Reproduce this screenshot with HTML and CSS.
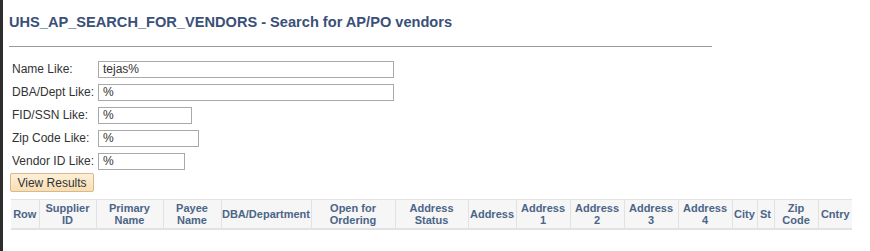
FILE: index.html
```html
<!DOCTYPE html>
<html>
<head>
<meta charset="utf-8">
<link rel="stylesheet" href="styles.css">
</head>
<body>
<div class="page">
  <h1 class="title">UHS_AP_SEARCH_FOR_VENDORS - Search for AP/PO vendors</h1>
  <div class="rule"></div>
  <div class="form">
    <div class="row"><label class="lbl">Name Like:</label><input class="inp w-name" value="tejas%"></div>
    <div class="row"><label class="lbl">DBA/Dept Like:</label><input class="inp w-name" value="%"></div>
    <div class="row"><label class="lbl">FID/SSN Like:</label><input class="inp w-fid" value="%"></div>
    <div class="row"><label class="lbl">Zip Code Like:</label><input class="inp w-zip" value="%"></div>
    <div class="row"><label class="lbl">Vendor ID Like:</label><input class="inp w-vid" value="%"></div>
  </div>
  <button class="btn">View Results</button>
  <table class="grid">
    <tr>
      <th class="c-row">Row</th>
      <th class="c-sup">Supplier<br>ID</th>
      <th class="c-prim">Primary<br>Name</th>
      <th class="c-pay">Payee<br>Name</th>
      <th class="c-dba">DBA/Department</th>
      <th class="c-open">Open for<br>Ordering</th>
      <th class="c-ast">Address<br>Status</th>
      <th class="c-addr">Address</th>
      <th class="c-a">Address<br>1</th>
      <th class="c-a">Address<br>2</th>
      <th class="c-a">Address<br>3</th>
      <th class="c-a">Address<br>4</th>
      <th class="c-city">City</th>
      <th class="c-st">St</th>
      <th class="c-zip">Zip<br>Code</th>
      <th class="c-cn">Cntry</th>
    </tr>
  </table>
</div>
</body>
</html>
```

FILE: styles.css
```css
html, body {
  margin: 0;
  padding: 0;
  background: #fff;
}
.page {
  border-left: 3px solid #2e2e2e;
  min-height: 251px;
  box-sizing: border-box;
  padding: 12px 0 0 6px;
  font-family: "Liberation Sans", Arial, sans-serif;
}
.title {
  margin: 0;
  font-size: 14.6px;
  font-weight: bold;
  color: #3a5078;
  line-height: 21px;
}
.rule {
  width: 703px;
  height: 1px;
  background: #9a9a9a;
  margin-top: 13px;
  margin-bottom: 13px;
}
.form {
  display: flex;
  flex-direction: column;
  gap: 5px;
  padding-left: 3px;
}
.row {
  display: flex;
  align-items: center;
  height: 18px;
}
.lbl {
  width: 86px;
  font-size: 12px;
  color: #333;
}
.inp {
  box-sizing: border-box;
  height: 17px;
  border: 1px solid #a9a9a9;
  padding: 0 4px;
  font-family: "Liberation Sans", Arial, sans-serif;
  font-size: 12px;
  color: #333;
  outline: none;
  margin: 0;
}
.w-name { width: 296px; }
.w-fid { width: 94px; }
.w-zip { width: 101px; }
.w-vid { width: 87px; }
.btn {
  display: block;
  margin: 3px 0 0 1px;
  width: 84px;
  height: 19px;
  padding: 0;
  border: 1px solid #d9b88a;
  border-radius: 2px;
  background: linear-gradient(#fdf0d8, #f8ddb4);
  font-family: "Liberation Sans", Arial, sans-serif;
  font-size: 12px;
  color: #333;
}
.grid {
  margin: 7px 0 0 2px;
  border-collapse: collapse;
  background: #f6f6f6;
  border-top: 1px solid #e2e2e2;
  border-bottom: 2px solid #e2e2e2;
}
.grid th {
  box-sizing: border-box;
  height: 29px;
  padding: 0;
  font-size: 11px;
  font-weight: bold;
  color: #4b6587;
  line-height: 12px;
  text-align: center;
  border-left: 1px solid #e2e2e2;
  white-space: nowrap;
}
.grid th:first-child { border-left: none; }
.c-row { width: 28px; }
.c-sup { width: 57px; }
.c-prim { width: 67px; }
.c-pay { width: 58px; }
.c-dba { width: 90px; }
.c-open { width: 84px; }
.c-ast { width: 73px; }
.c-addr { width: 48px; }
.c-a { width: 54px; }
.c-city { width: 25px; }
.c-st { width: 17px; }
.c-zip { width: 44px; }
.c-cn { width: 34px; }
```
